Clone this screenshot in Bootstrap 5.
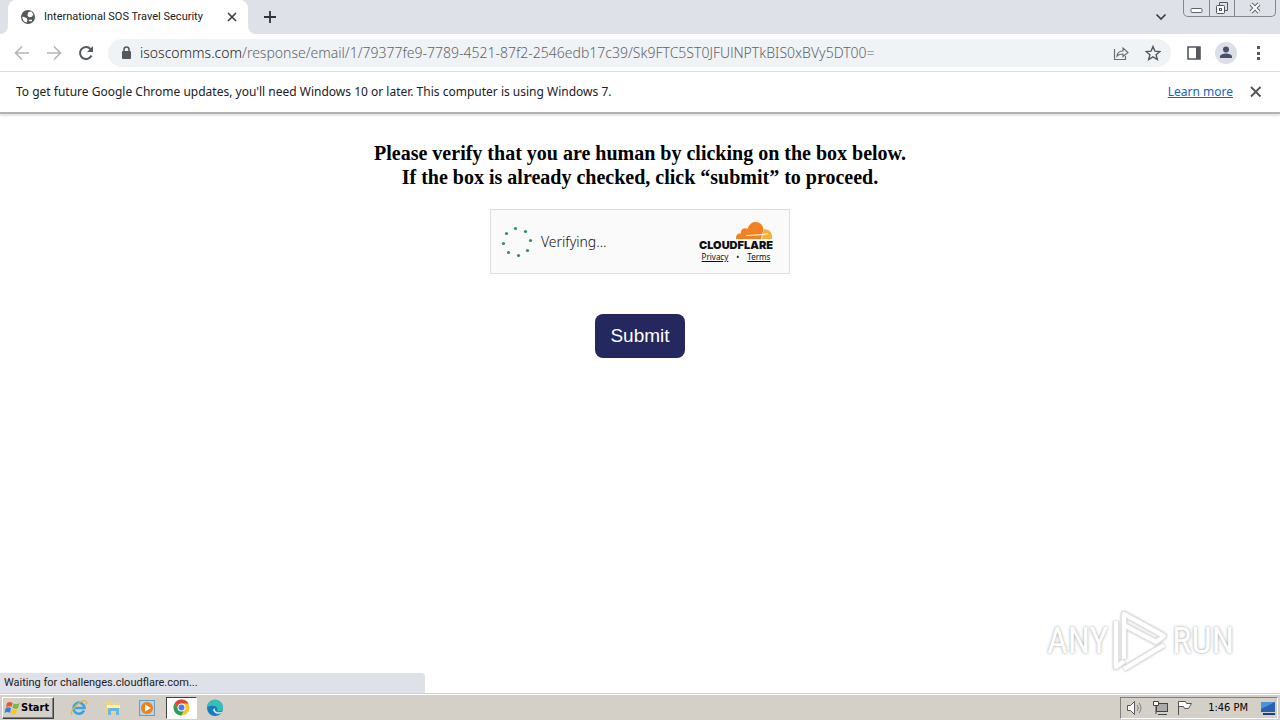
<!DOCTYPE html>
<html lang="en">
<head>
<meta charset="utf-8">
<meta name="viewport" content="width=device-width, initial-scale=1">
<title>International SOS Travel Security</title>
<link href="https://cdn.jsdelivr.net/npm/bootstrap@5.3.0/dist/css/bootstrap.min.css" rel="stylesheet">
<style>
  body { font-family: "DejaVu Sans Condensed", "Noto Sans", sans-serif; font-size: 12px; line-height: 16px; color: #202124; background: #fff; }
  button { color: inherit; }
  svg { display: block; flex: none; }
  .plain { border: 0; background: none; padding: 0; }
  .tabstrip { background: #dee1e8; height: 34px; }
  .strip-edge { width: 8px; height: 34px; background: #fff; }
  .strip-edge::before { content: ""; display: block; height: 34px; background: #dee1e8; border-bottom-right-radius: 8px; }
  .strip-edge.after-tab::before { border-radius: 0 0 0 8px; }
  .page-tab { width: 240px; background: #fff; border-radius: 8px 8px 0 0; padding: 0 10px 0 12px; font-family: Roboto, sans-serif; font-size: 11px; }
  .caption { border: 1px solid #85878d; border-top: 0; border-radius: 0 0 5px 5px; height: 17px; margin-right: 4px; }
  .caption button { width: 25px; height: 16px; display: flex; justify-content: center; align-items: center; }
  .caption button:last-child { width: 41px; }
  .caption button + button { border-left: 1px solid #85878d; }
  .toolbar { height: 38px; border-bottom: 1px solid #dadce0; padding: 0 15px 0 12px; }
  .tool { margin-left: 14px; }
  .omnibox { background: #f0f3f6; border-radius: 14px; height: 28px; padding: 0 10px 0 12px; font-family: "Noto Sans", sans-serif; font-weight: 300; font-size: 14px; }
  .omnibox input { border: 0; padding: 0; background: none; color: #5f6368; outline: 0; font-weight: 300; }
  .infobar { height: 42px; padding: 0 17px 0 16px; border-bottom: 2px solid #b2b2b2; box-shadow: 0 2px 2px #e4e4e4; font-family: "Noto Sans", sans-serif; }
  .infobar a { color: #1a62c4; }
  .verify-title { font-family: "Liberation Serif", serif; font-weight: 700; font-size: 20px; line-height: 24px; color: #000; margin: 27px 0 20px; }
  .challenge { width: 300px; height: 65px; border: 1px solid #dedede; background: #fafafa; padding: 0 16px 0 10px; font-size: 14px; }
  .verifying { font-family: "Noto Sans", sans-serif; font-weight: 300; color: #111; }
  .brand { padding-top: 2px; }
  .wordmark { font: 900 11px/12px Inter, sans-serif; color: #111; }
  .legal { font-family: "Noto Sans", sans-serif; font-size: 8px; line-height: 12px; }
  .legal a { color: #111; }
  .submit-btn, .submit-btn:hover { background: #25275f; color: #fff; font: 19px/30px "Liberation Sans", sans-serif; border: 0; border-radius: 8px; padding: 7px 15px; margin-top: 40px; }
  .watermark { position: absolute; right: 46px; bottom: 0; font: 36px/64px "Roboto Condensed", Roboto, sans-serif; color: #fff; text-shadow: 0 0 3px #999; }
  .watermark svg { filter: drop-shadow(0 0 1px #bbb); }
  .status { width: 33.2%; height: 20px; background: #dee1e8; border-radius: 0 4px 0 0; padding: 2px 4px; font-family: Roboto, sans-serif; font-size: 11px; }
  .taskbar { height: 27px; background: #d4d0c8; border-top: 1px solid #d4d0c8; box-shadow: inset 0 1px #fff; padding: 3px 2px 2px; color: #000; }
  .start { width: 52px; height: 22px; background: #d4d0c8; border: 1px solid; border-color: #fff #404040 #404040 #fff; box-shadow: inset -1px -1px #808080; font: 700 11px/16px "DejaVu Sans Condensed", sans-serif; padding: 0 1px; }
  .task { width: 34px; height: 22px; display: flex; align-items: center; justify-content: center; }
  .task.current { width: 31px; margin: 0 1px 0 2px; background: #fff; border: 1px solid; border-color: #404040 #fff #fff #404040; }
  .tray { height: 22px; border: 1px solid; border-color: #808080 #fff #fff #808080; padding: 0 1px 0 5px; font-family: "DejaVu Sans Condensed", sans-serif; font-size: 11px; }
</style>
</head>
<body class="d-flex flex-column min-vh-100">
<header>
  <div class="tabstrip d-flex">
    <div class="strip-edge"></div>
    <div class="page-tab d-flex align-items-center">
      <svg width="16" height="16" viewBox="0 0 16 16"><circle cx="8" cy="8" r="7" fill="#55585c"/><path d="M2.500 7.500l4 1.500 1 2-1 2.500c-2.500-.500-4.500-3-4-6zM8 3.500l3-1.200 2.500 3-1.500 2.500-3 .500-1.500-1.500z" fill="#fff"/><path d="M9 11.500h3" stroke="#fff" stroke-width="1.400"/></svg>
      <span class="ms-2 flex-grow-1 text-nowrap">International SOS Travel Security</span>
      <button class="plain" aria-label="Close tab"><svg width="12" height="12" viewBox="0 0 12 12"><path d="M2 2l8 8M10 2l-8 8" stroke="#3c4043" stroke-width="1.700"/></svg></button>
    </div>
    <div class="strip-edge after-tab"></div>
    <button class="plain ms-2" aria-label="New tab"><svg width="12" height="34" viewBox="0 0 12 34"><path d="M6 11v12M0 17h12" stroke="#303338" stroke-width="1.800"/></svg></button>
    <div class="ms-auto d-flex align-items-start">
      <button class="plain me-3" aria-label="Search tabs"><svg width="12" height="34" viewBox="0 0 12 34"><path d="M1.500 14.500l4.500 4.500 4.500-4.500" fill="none" stroke="#3c4043" stroke-width="1.700"/></svg></button>
      <div class="caption d-flex">
        <button class="plain" aria-label="Minimize"><svg width="13" height="16"><rect x="1" y="8.500" width="11" height="4" rx="1" fill="#fff" stroke="#60646c"/></svg></button>
        <button class="plain" aria-label="Restore"><svg width="14" height="16"><path d="M4.500 5v-2.500h8v8h-2.500" fill="none" stroke="#50545c"/><rect x="1.500" y="5.500" width="8" height="8" rx="1" fill="#fff" stroke="#50545c"/><rect x="4.500" y="8.500" width="2" height="2" fill="none" stroke="#50545c"/></svg></button>
        <button class="plain" aria-label="Close"><svg width="14" height="16"><path d="M3 4l8 8M11 4l-8 8" stroke="#60646c" stroke-width="4"/><path d="M3 4l8 8M11 4l-8 8" stroke="#fff" stroke-width="2"/></svg></button>
      </div>
    </div>
  </div>
  <nav class="toolbar d-flex align-items-center">
    <button class="plain" aria-label="Back"><svg width="20" height="20" viewBox="0 0 20 20"><path d="M17 10H4M10 3.500L3.500 10l6.500 6.500" fill="none" stroke="#b4b6b9" stroke-width="1.700"/></svg></button>
    <button class="plain ms-2 ps-1" aria-label="Forward"><svg width="20" height="20" viewBox="0 0 20 20"><path d="M3 10h13M10 3.500l6.500 6.500-6.500 6.500" fill="none" stroke="#b4b6b9" stroke-width="1.700"/></svg></button>
    <button class="plain ms-2 px-1" aria-label="Reload"><svg width="20" height="20" viewBox="0 0 20 20"><path d="M15.500 12.500A6 6 0 1 1 14.500 6" fill="none" stroke="#55585c" stroke-width="2"/><path d="M17 3v6h-6z" fill="#55585c"/></svg></button>
    <div class="omnibox d-flex align-items-center flex-grow-1 ms-2 me-3">
      <svg width="12" height="16" viewBox="0 0 12 16"><rect x="2" y="6" width="9" height="8" rx="1" fill="#55585c"/><path d="M4 7V4.500a2.500 2.500 0 0 1 5 0V7" fill="none" stroke="#55585c" stroke-width="1.500"/></svg>
      <label for="address" class="ms-2">isoscomms.com</label>
      <input id="address" class="flex-grow-1" type="text" value="/response/email/1/79377fe9-7789-4521-87f2-2546edb17c39/Sk9FTC5ST0JFUlNPTkBIS0xBVy5DT00=">
      <button class="plain" aria-label="Share"><svg width="16" height="16" viewBox="0 0 16 16"><path d="M1.500 4v10.500h11V11M4 11c.5-4 3-5 6-5V3l5 4.500-5 4V9C7 9 5.500 9.500 4 11z" fill="none" stroke="#6b6e73" stroke-width="1.200"/></svg></button>
      <button class="plain ms-3" aria-label="Bookmark"><svg width="16" height="16" viewBox="0 0 16 16"><path d="M8 1.500l1.900 4.600 5 .4-3.800 3.200 1.200 4.800L8 11.900l-4.300 2.600 1.200-4.800L1.100 6.500l5-.4z" fill="none" stroke="#55585c" stroke-width="1.400"/></svg></button>
    </div>
    <button class="plain" aria-label="Side panel"><svg width="14" height="14" viewBox="0 0 14 14"><path d="M1 1h12v12H1z" fill="none" stroke="#55585c" stroke-width="1.600"/><path d="M9 1h4v12H9z" fill="#55585c"/></svg></button>
    <button class="plain tool" aria-label="Profile"><svg width="22" height="22" viewBox="0 0 22 22"><circle cx="11" cy="11" r="11" fill="#dcdfe5"/><circle cx="11" cy="7.500" r="3" fill="#46506c"/><path d="M5 16v-1.500c0-2 3.500-3 6-3s6 1 6 3V16z" fill="#46506c"/></svg></button>
    <button class="plain ms-3" aria-label="Menu"><svg width="12" height="16" viewBox="0 0 12 16"><path d="M4 1h3v3H4zM4 7h3v3H4zM4 12h3v3H4z" fill="#55585c"/></svg></button>
  </nav>
  <div class="infobar d-flex align-items-center">
    <span>To get future Google Chrome updates, you'll need Windows 10 or later. This computer is using Windows 7.</span>
    <a class="ms-auto" href="#">Learn more</a>
    <button class="plain ms-3" aria-label="Dismiss"><svg width="14" height="14" viewBox="0 0 14 14"><path d="M2 2l9.500 9.500M11.500 2L2 11.500" stroke="#505357" stroke-width="1.800"/></svg></button>
  </div>
</header>
<main class="flex-grow-1 position-relative d-flex flex-column align-items-center">
  <h3 class="verify-title text-center">Please verify that you are human by clicking on the box below.<br>If the box is already checked, click “submit” to proceed.</h3>
  <section class="challenge d-flex align-items-center">
    <svg width="32" height="32" viewBox="0 0 32 32" fill="#2f8f62"><circle cx="14.500" cy="2.500" r="1.600"/><circle cx="24.500" cy="5.500" r="1.600"/><circle cx="29.500" cy="14.500" r="1.600"/><circle cx="26.500" cy="24.500" r="1.600"/><circle cx="17.500" cy="29.500" r="1.600"/><circle cx="7.500" cy="26.500" r="1.600"/><circle cx="2.500" cy="17.500" r="1.600"/><circle cx="5.500" cy="7.500" r="1.600"/></svg>
    <span class="verifying ms-2">Verifying...</span>
    <div class="brand ms-auto d-flex flex-column align-items-center">
      <svg class="align-self-end" width="38" height="17" viewBox="0 0 38 17"><path d="M1 17c-.5-4 2-6 5-5.500-.5-4 3-6.500 6.500-4.500C14 2.500 17 0 20.500 0 25 0 28 3 28.500 7.500L26 17z" fill="#f48120"/><path d="M27 17l1.500-9.500c5-1 9.500 3 8.500 9.500z" fill="#faad3f"/><path d="M11 13.500l16-.8 6-1.200" fill="none" stroke="#fff" stroke-width="1"/></svg>
      <span class="wordmark">CLOUDFLARE</span>
      <span class="legal d-flex gap-2"><a href="#">Privacy</a><span>•</span><a href="#">Terms</a></span>
    </div>
  </section>
  <button class="submit-btn btn">Submit</button>
  <div class="watermark d-flex align-items-center">
    <span>ANY</span>
    <svg width="64" height="64" viewBox="0 0 64 64"><path d="M16 50V5l40 22-8 6-32-17M8 12v46l8-6M16 60l40-24" fill="none" stroke="#e2e2e2" stroke-width="6" stroke-linejoin="round"/><path d="M16 50V5l40 22-8 6-32-17M8 12v46l8-6M16 60l40-24" fill="none" stroke="#fff" stroke-width="4" stroke-linejoin="round"/></svg>
    <span>RUN</span>
  </div>
</main>
<footer>
  <div class="status text-nowrap">Waiting for challenges.cloudflare.com...</div>
  <div class="taskbar d-flex align-items-center">
    <button class="start d-flex align-items-center"><svg width="17" height="16" viewBox="0 0 17 16"><path d="M3 3c2-1.500 4-1.500 5.500 0L7.500 7C6 6 4 6 2 7.500z" fill="#e8572b"/><path d="M9.500 3.500c2 1 4 1 6-.5l-1.500 5c-2 1.300-4 1-5.500-.3z" fill="#7db83a"/><path d="M1.500 8.500c2-1.500 4-1.500 5.500-.2L6 13c-1.500-1.500-3.500-1.500-5.500 0z" fill="#3c7ed0"/><path d="M8 9c2 1.200 4 1.200 5.500 0L12 13.500c-2 1.500-3.500 1-5 0z" fill="#f8c52c"/></svg>Start</button>
    <div class="d-flex ms-2">
      <button class="plain task" aria-label="Internet Explorer"><svg width="18" height="18" viewBox="0 0 18 18"><path d="M14 11.500A5.500 5.500 0 1 1 14.500 9H5" fill="none" stroke="#39a3e3" stroke-width="2.600"/><path d="M2 16C-1 12 11 0 16 2c1 .5 1 2 0 3.500" fill="none" stroke="#e6b53c" stroke-width="1.300"/></svg></button>
      <button class="plain task" aria-label="Explorer"><svg width="18" height="18" viewBox="0 0 18 18"><path d="M2 3h5l1 1h8v10H2z" fill="#f0d67a"/><path d="M3 6h13v3H3z" fill="#fbf0b8"/><path d="M4 16V9h11v7h-3v-4H7v4z" fill="#6cb6dd"/></svg></button>
      <button class="plain task" aria-label="Media Player"><svg width="18" height="18" viewBox="0 0 18 18"><rect x="1.500" y="1.500" width="15" height="15" fill="#b5d4ec" stroke="#6a9cc4"/><circle cx="9" cy="9" r="6" fill="#ee7f19"/><path d="M7 5.500l6 3.500-6 3.500z" fill="#fff"/></svg></button>
      <button class="plain task current" aria-label="Chrome"><svg width="17" height="17" viewBox="0 0 17 17"><circle cx="8.500" cy="8.500" r="8" fill="#f6c62d"/><path d="M1.600 4.500A8 8 0 0 1 15.400 4.500H8.500L5 10.500z" fill="#df4437"/><path d="M1.600 4.500a8 8 0 0 0 6.500 12l3.500-6H5z" fill="#2c9f52"/><circle cx="8.500" cy="8.500" r="4" fill="#fff"/><circle cx="8.500" cy="8.500" r="3" fill="#4180e8"/></svg></button>
      <button class="plain task" aria-label="Edge"><svg width="18" height="18" viewBox="0 0 18 18"><circle cx="9" cy="9" r="8" fill="#167bc7"/><path d="M1 8a8 8 0 0 1 16 1c0 3-3 4-6 3 1-2 0-5-3-5-3-.500-6 .500-7 1z" fill="#36c0b4"/><path d="M9 9c-1 3 2 5 6 4l1 .5c-4 3-9 0-9-3z" fill="#d4eef8"/></svg></button>
    </div>
    <div class="tray d-flex align-items-center ms-auto">
      <svg width="18" height="16" viewBox="0 0 18 16"><path d="M1.500 5.500h3l4-4v13l-4-4h-3z" fill="#fff" stroke="#555"/><path d="M11 5c1.500 2 1.500 4 0 6M13 3c2.500 3 2.500 7 0 10" fill="none" stroke="#777"/></svg>
      <svg class="ms-2" width="16" height="16" viewBox="0 0 16 16"><rect x="4.500" y="3.500" width="11" height="8" fill="#aaa" stroke="#444"/><path d="M1.500 1.500h5v4h-5zM4 6v8M6 14.500h9" fill="#fff" stroke="#444"/></svg>
      <svg class="ms-2" width="16" height="16" viewBox="0 0 16 16"><path d="M2.500 15V1.500h7l1 2h5l-3 5h-4l-1-2h-5" fill="#fff" stroke="#555"/></svg>
      <time class="ms-3 me-2">1:46 PM</time>
      <svg class="ms-1" width="16" height="16" viewBox="0 0 16 16"><path d="M1 2h14v10H1z" fill="#2761b3"/><path d="M1 2h14L1 9z" fill="#4e92dc"/><path d="M3 13h12v2H3z" fill="#173f7f"/></svg>
    </div>
  </div>
</footer>
<script src="https://cdn.jsdelivr.net/npm/bootstrap@5.3.0/dist/js/bootstrap.bundle.min.js"></script>
</body>
</html>
